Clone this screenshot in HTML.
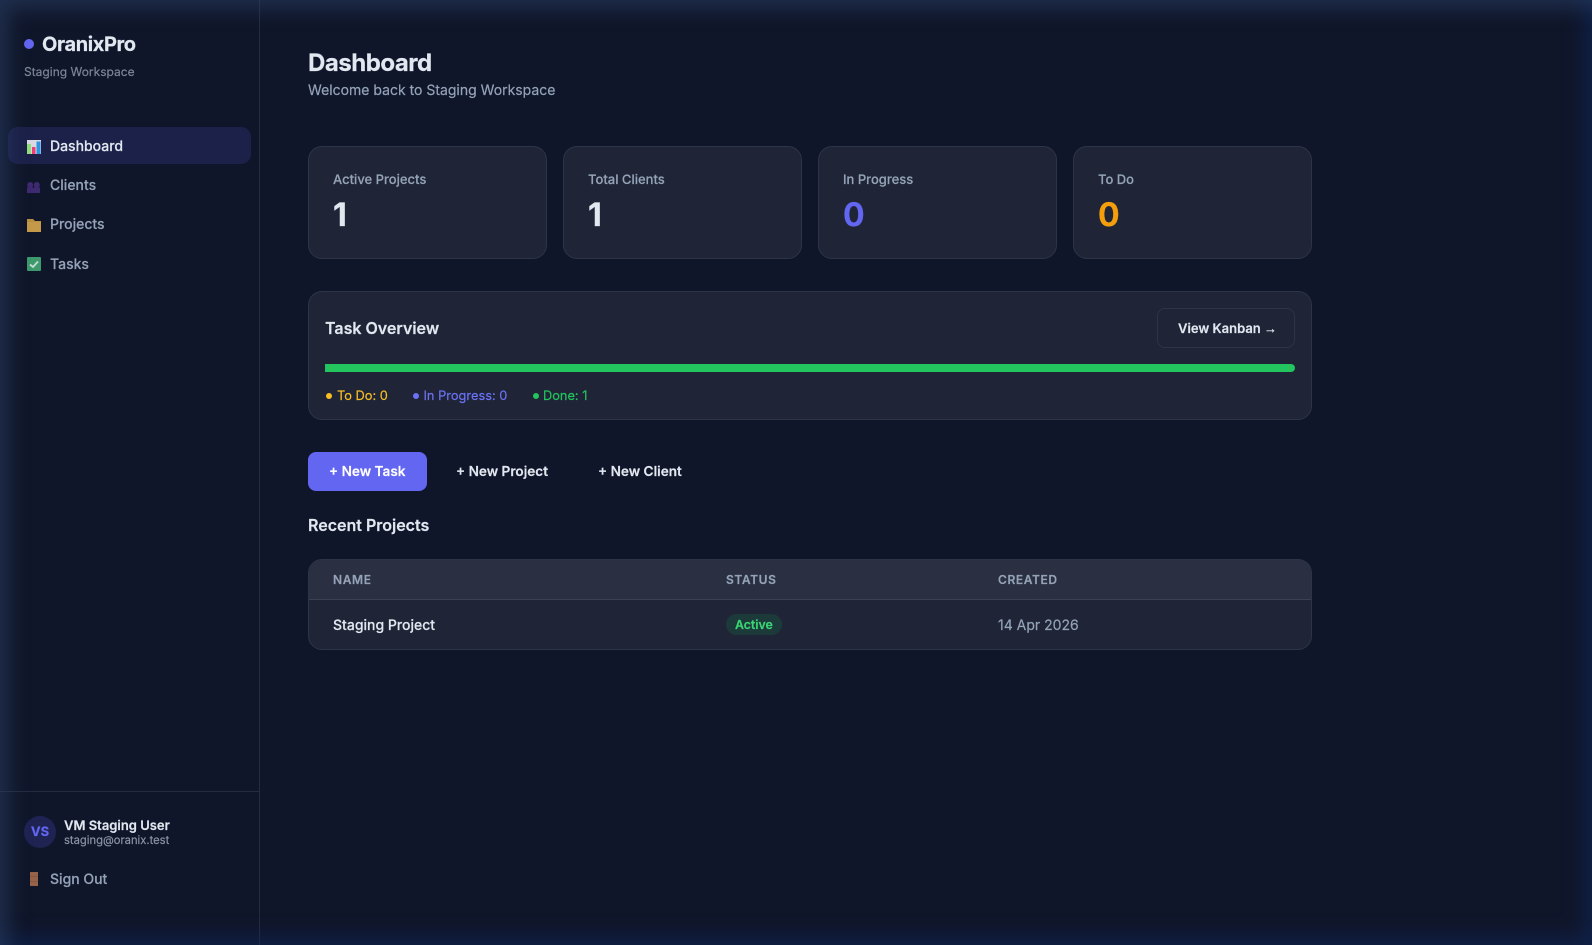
<!DOCTYPE html>
<html lang="en"><head><meta charset="utf-8"><title>Dashboard</title>
<style>
*{box-sizing:border-box;margin:0;padding:0}
html,body{width:1592px;height:945px;overflow:hidden;background:#10162a}
body{position:relative;font-family:"Inter","Liberation Sans",sans-serif;color:#e2e8f0;-webkit-text-stroke:.18px currentColor}
.t{position:absolute;white-space:nowrap;line-height:20px;height:20px}
.box{position:absolute;background:#1f2537;border:1px solid #2d3447;border-radius:14px}
.stat{top:146px;width:239px;height:113px}
.lbl{font-size:13px;font-weight:500;color:#94a3b8;top:170px}
.val{font-size:32px;font-weight:700;top:195px;line-height:40px;height:40px}
.nav{font-size:14px;font-weight:500;color:#94a3b8}
.dot{position:absolute;width:6px;height:6px;border-radius:50%;top:393px}
.leg{font-size:12.8px;top:387px}
.btn{font-size:13.6px;font-weight:600;color:#e2e8f0;top:462px}
.th{font-size:12px;font-weight:600;letter-spacing:.6px;color:#94a3b8;top:570px}
svg{position:absolute;display:block}
#glow{position:absolute;inset:0;box-shadow:inset 16px 16px 20px -8px rgba(44,68,108,.55),inset -16px -16px 20px -8px rgba(14,40,92,.55);pointer-events:none;z-index:5}
</style></head><body>
<div style="position:absolute;left:259px;top:0;width:1px;height:945px;background:#232c40"></div>
<div style="position:absolute;left:0;top:791px;width:259px;height:1px;background:#232c40"></div>

<div style="position:absolute;left:24px;top:39px;width:10px;height:10px;border-radius:50%;background:#6366f1"></div>
<div class="t" style="left:42px;top:34px;font-size:20px;font-weight:700;letter-spacing:-.4px;color:#e2e8f0">OranixPro</div>
<div class="t" style="left:24px;top:62px;font-size:12px;color:#7c8597">Staging Workspace</div>

<div style="position:absolute;left:8px;top:127px;width:243px;height:37px;border-radius:10px;background:#1b2149"></div>
<svg style="left:27px;top:140px" width="14" height="14" viewBox="0 0 14 14"><rect width="14" height="14" fill="#d9d9e4"/><rect x="0" y="4" width="4" height="10" fill="#8fe07a"/><rect x="5" y="7" width="3.500" height="7" fill="#ec3f78"/><rect x="9.500" y="1.500" width="4" height="12.500" fill="#2f95e0"/></svg>
<div class="t nav" style="left:50px;top:137px;color:#e2e8f0">Dashboard</div>
<svg style="left:27px;top:182px" width="13" height="11" viewBox="0 0 13 11"><g fill="#3d2a70"><circle cx="3.200" cy="3" r="3"/><circle cx="9.800" cy="3" r="3"/><rect x="0" y="5.500" width="13" height="5.500"/></g></svg>
<div class="t nav" style="left:50px;top:176px">Clients</div>
<svg style="left:27px;top:219px" width="14" height="13" viewBox="0 0 14 13"><path d="M0 0H6L8 2H14V13H0Z" fill="#b98f41"/><rect y="3" width="14" height="10" fill="#c49a4a"/></svg>
<div class="t nav" style="left:50px;top:215px">Projects</div>
<svg style="left:27px;top:257px" width="14" height="14" viewBox="0 0 14 14"><rect width="14" height="14" rx="1" fill="#3c9a6c"/><path d="M3 7.500L6 10L11 4.500" fill="none" stroke="#c5dcd2" stroke-width="1.800"/></svg>
<div class="t nav" style="left:50px;top:255px">Tasks</div>

<div style="position:absolute;left:24px;top:816px;width:32px;height:32px;border-radius:50%;background:#1f2352;color:#6366f1;font-size:13px;font-weight:700;text-align:center;line-height:32px">VS</div>
<div class="t" style="left:64px;top:816px;font-size:13px;font-weight:600;color:#e2e8f0">VM Staging User</div>
<div class="t" style="left:64px;top:830px;font-size:11.2px;color:#8a93a5">staging@oranix.test</div>
<svg style="left:30px;top:872px" width="8" height="14" viewBox="0 0 8 14"><rect width="8" height="14" fill="#96634a"/><path d="M0 4.500H8M0 9.500H8" stroke="#85553f" stroke-width=".8"/></svg>
<div class="t nav" style="left:50px;top:870px">Sign Out</div>

<div class="t" style="left:308px;top:47px;height:32px;line-height:32px;font-size:24px;font-weight:700;letter-spacing:-.48px;color:#e2e8f0">Dashboard</div>
<div class="t" style="left:308px;top:81px;font-size:14px;color:#94a3b8">Welcome back to Staging Workspace</div>

<div class="box stat" style="left:308px"></div>
<div class="box stat" style="left:563px"></div>
<div class="box stat" style="left:818px"></div>
<div class="box stat" style="left:1073px"></div>
<div class="t lbl" style="left:333px">Active Projects</div>
<div class="t val" style="left:333px;color:#e2e8f0">1</div>
<div class="t lbl" style="left:588px">Total Clients</div>
<div class="t val" style="left:588px;color:#e2e8f0">1</div>
<div class="t lbl" style="left:843px">In Progress</div>
<div class="t val" style="left:843px;color:#6366f1">0</div>
<div class="t lbl" style="left:1098px">To Do</div>
<div class="t val" style="left:1098px;color:#f59e0b">0</div>

<div class="box" style="left:308px;top:291px;width:1004px;height:129px"></div>
<div class="t" style="left:325px;top:318px;font-size:16px;font-weight:600;color:#e2e8f0">Task Overview</div>
<div style="position:absolute;left:1157px;top:308px;width:138px;height:40px;border:1px solid #2d3447;border-radius:8px"></div>
<div class="t" style="left:1178px;top:319px;font-size:13px;font-weight:600;color:#e2e8f0">View Kanban <span style="font-family:'Liberation Sans',sans-serif;font-weight:400">→</span></div>
<div style="position:absolute;left:325px;top:364px;width:970px;height:8px;border-radius:0 4px 4px 0;background:#22c55e"></div>
<div class="dot" style="left:326px;background:#fbbf24"></div>
<div class="t leg" style="left:337px;color:#fbbf24">To Do: 0</div>
<div class="dot" style="left:413px;background:#6b72f5"></div>
<div class="t leg" style="left:423.500px;color:#6b72f5">In Progress: 0</div>
<div class="dot" style="left:532.500px;background:#22c55e"></div>
<div class="t leg" style="left:543px;color:#22c55e">Done: 1</div>

<div style="position:absolute;left:308px;top:452px;width:119px;height:39px;border-radius:8px;background:#6366f1"></div>
<div class="t btn" style="left:329px;color:#fff">+ New Task</div>
<div class="t btn" style="left:456px">+ New Project</div>
<div class="t btn" style="left:598px">+ New Client</div>
<div class="t" style="left:308px;top:515px;font-size:16px;font-weight:600;color:#e2e8f0">Recent Projects</div>

<div class="box" style="left:308px;top:559px;width:1004px;height:91px;overflow:hidden"><div style="height:40px;background:#2a3042;border-bottom:1px solid #3a4153"></div></div>
<div class="t th" style="left:333px">NAME</div>
<div class="t th" style="left:726px">STATUS</div>
<div class="t th" style="left:998px">CREATED</div>
<div class="t" style="left:333px;top:616px;font-size:14px;font-weight:500;color:#e2e8f0">Staging Project</div>
<div style="position:absolute;left:726px;top:614px;width:56px;height:21px;border-radius:11px;background:#1c3a3a"></div>
<div class="t" style="left:735px;top:615px;font-size:12.3px;font-weight:600;color:#3ad673">Active</div>
<div class="t" style="left:998px;top:616px;font-size:14px;color:#94a3b8">14 Apr 2026</div>
<div id="glow"></div>
</body></html>
